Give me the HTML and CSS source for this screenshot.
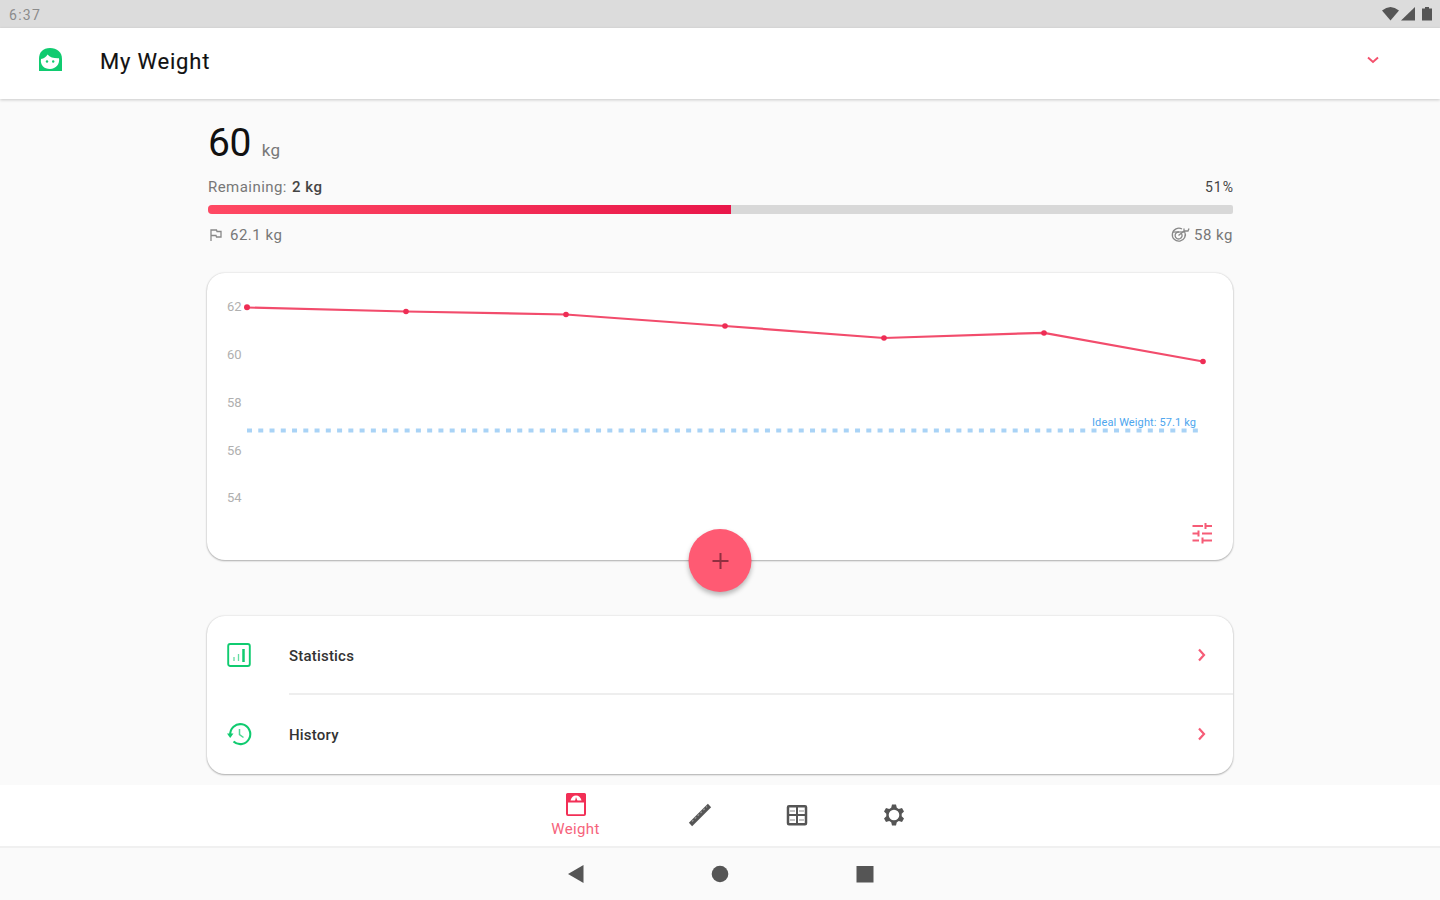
FILE: index.html
```html
<!DOCTYPE html>
<html lang="en">
<head>
<meta charset="utf-8">
<title>My Weight</title>
<link rel="stylesheet" href="styles.css">
</head>
<body>
<div class="status">
  <span class="clock">6:37</span>
  <svg class="status-icons" width="52" height="16" viewBox="0 0 52 16">
    <path d="M0 4.500Q8.500-2.500 17 4.500L8.500 14.500Z"/><path d="M19 14.500H33V1Z"/><path d="M40 2.500h3V1h4v1.500h3v12H40Z"/>
  </svg>
</div>
<header class="appbar">
  <svg class="avatar" width="24" height="24" viewBox="0 0 24 24">
    <path fill="#10cb70" d="M1 23V11C1 4 5 0 12 0S24 4 24 11V23Z"/>
    <path fill="#fff" d="M3 11C6 10.500 8 9 9.500 6.500C12 9.500 16 10.500 21 10.300C22 16 18 21 12 21S2 17 3 11Z"/>
    <circle cx="9" cy="13.500" r="1.200" fill="#10cb70"/><circle cx="15.200" cy="13.500" r="1.200" fill="#10cb70"/>
  </svg>
  <h1>My Weight</h1>
  <svg class="chevron-down" width="12" height="8" viewBox="0 0 12 8"><path d="M1 1.500L6 6L11 1.500"/></svg>
</header>
<main>
  <section class="summary">
    <div class="current"><span class="value">60</span><span class="unit">kg</span></div>
    <div class="row remaining"><span>Remaining: <b>2 kg</b></span><b>51%</b></div>
    <div class="track"><div class="fill" style="width:51%"></div></div>
    <div class="row goals">
      <span class="start"><svg width="14" height="14" viewBox="0 0 14 14"><path d="M2 13V2H7.500L8 3.500H12V9H7.500L7 7.500H2"/></svg>62.1 kg</span>
      <span class="goal"><svg width="18" height="16" viewBox="0 0 18 16"><path d="M13.500 4.500A6.500 6.500 0 1 1 11 2M10.500 6.500A3.500 3.500 0 1 1 8 5M7.500 8.500L13 4V1.500M13 4H17L18 1.500"/><path d="M2 5H13"/></svg>58 kg</span>
    </div>
  </section>
  <section class="card chart">
    <svg width="1026" height="287" viewBox="207 273 1026 287">
      <g class="axis">
        <text x="227" y="311">62</text><text x="227" y="358.500">60</text><text x="227" y="406.500">58</text><text x="227" y="454.500">56</text><text x="227" y="502">54</text>
      </g>
      <line class="ideal" x1="247" y1="430.500" x2="1198" y2="430.500"/>
      <text class="ideal-label" x="1092" y="426" textLength="104">Ideal Weight: 57.1 kg</text>
      <polyline class="series" points="247,307.500 406,311.500 566,314.500 725,326 884,338 1044,332.800 1203,361.500"/>
      <g class="points"><circle cx="247" cy="307.300" r="3"/><circle cx="406" cy="311.500" r="2.800"/><circle cx="566" cy="314.500" r="2.800"/><circle cx="725" cy="326" r="2.800"/><circle cx="884" cy="338" r="2.800"/><circle cx="1044" cy="333" r="2.800"/><circle cx="1203" cy="361.500" r="2.800"/></g>
      <g class="tune"><path d="M1192.500 526H1203M1206 526H1212M1192.500 533.500H1198M1202 533.500H1212M1192.500 540.500H1199M1203 540.500H1212M1205.500 523V529M1198.500 530.500V536.500M1202.500 537.500V543.500"/></g>
    </svg>
    <button class="fab" aria-label="Add"><svg width="16" height="16" viewBox="0 0 16 16"><path d="M8 0V16M0 8H16"/></svg></button>
  </section>
  <section class="card menu">
    <div class="item">
      <svg class="glyph" width="24" height="26" viewBox="0 0 24 26"><rect x="1.200" y="2" width="21.600" height="22" rx="2" stroke-width="1.900"/><path stroke-width="1.300" stroke-opacity=".65" d="M7 15V19M11.500 12V19"/><path stroke-width="2.500" d="M16.500 7V20"/></svg>
      <span class="label">Statistics</span>
      <svg class="next" width="10" height="14" viewBox="0 0 10 14"><path d="M2 1.500L7 7L2 12.500"/></svg>
    </div>
    <div class="item">
      <svg class="glyph" width="24" height="26" viewBox="0 0 24 26"><path stroke-width="2.100" d="M3.300 14A10 10 0 1 1 6.500 20.500"/><path fill="#10cb70" stroke="none" d="M0 12.500H6.500L3.200 17Z"/><path stroke-width="1.500" stroke-opacity=".75" d="M12.500 8V13.500L16.500 16.500"/></svg>
      <span class="label">History</span>
      <svg class="next" width="10" height="14" viewBox="0 0 10 14"><path d="M2 1.500L7 7L2 12.500"/></svg>
    </div>
  </section>
</main>
<nav class="tabs">
  <div class="tab active">
    <svg width="22" height="24" viewBox="0 0 22 24"><path fill="#f22f56" fill-rule="evenodd" d="M2.500 0H19.500Q21 0 21 1.500V21Q21 23 19 23H3Q1 23 1 21V1.500Q1 0 2.500 0ZM3 9.500V21.200H19V9.500Z"/><path fill="#fff" d="M5.500 7.500Q7 2.500 11 2.500T16.500 7.500Z"/><path fill="#f22f56" d="M10 8L11 4L12.500 8Z"/></svg>
    <span>Weight</span>
  </div>
  <div class="tab"><svg width="24" height="24" viewBox="0 0 24 24"><path d="M2.500 21.500L21.500 2.500" stroke="#555" stroke-width="4.600"/><path d="M4 18.500L19 3.500" stroke="#999" stroke-width="1.200" stroke-dasharray="2 2"/></svg></div>
  <div class="tab"><svg width="24" height="24" viewBox="0 0 24 24" fill="none" stroke="#555"><rect x="3" y="3.200" width="18" height="18" rx="1" stroke-width="2.500"/><path stroke-width="2" d="M12 3V21M3 12H21"/><path stroke-width="1.200" stroke="#888" d="M5 8H10M14 8H19M5 17H10M14 17H19"/></svg></div>
  <div class="tab"><svg width="24" height="24" viewBox="0 0 24 24"><path fill="#555" fill-rule="evenodd" d="M10 1.500H14L14.800 4.800L16.800 6L20 5L22 8.500L19.700 10.800V13.200L22 15.500L20 19L16.800 18L14.800 19.200L14 22.500H10L9.200 19.200L7.200 18L4 19L2 15.500L4.300 13.200V10.800L2 8.500L4 5L7.200 6L9.200 4.800ZM12 6.700A5.300 5.300 0 1 0 12 17.300A5.300 5.300 0 1 0 12 6.700Z"/></svg></div>
</nav>
<div class="sysnav">
  <svg width="18" height="20" viewBox="0 0 18 20"><path d="M1 10L16.500 1V19Z"/></svg>
  <svg width="18" height="20" viewBox="0 0 18 20"><circle cx="9" cy="10" r="8.300"/></svg>
  <svg width="18" height="20" viewBox="0 0 18 20"><rect x=".5" y="2" width="17" height="16.500"/></svg>
</div>
</body>
</html>
```
FILE: styles.css
```css
* { box-sizing: border-box; }
body { margin: 0; width: 1440px; height: 900px; overflow: hidden; display: flex; flex-direction: column; background: #fafafa; color: #222; font-family: Roboto, "Liberation Sans", sans-serif; }
svg { display: block; flex: none; overflow: visible; }
.status { flex: none; height: 28px; padding: 0 6px 0 9px; background: #dcdcdc; display: flex; align-items: center; justify-content: space-between; }
.clock { color: #8b8b8b; font-size: 14px; letter-spacing: 1.3px; padding-top: 1px; }
.status-icons { fill: #555; }
.appbar { flex: none; height: 71px; padding: 0 61px 7px 38px; display: flex; align-items: center; background: #fff; box-shadow: 0 1px 3px rgba(0,0,0,.2); }
h1 { margin: 3px 0 0 38px; font-size: 22px; font-weight: 400; line-height: 26px; letter-spacing: .8px; color: #111; flex: 1; -webkit-text-stroke: .15px #111; }
.chevron-down { fill: none; stroke: #f4506c; stroke-width: 1.900; }
main { flex: none; height: 686px; width: 1026px; margin: 0 auto; display: flex; flex-direction: column; }
.summary { height: 174px; padding: 21px 0 0 1px; }
.current { height: 46px; display: flex; align-items: baseline; gap: 11px; line-height: 46px; }
.value { font-size: 39px; font-weight: 400; letter-spacing: -.5px; color: #111; }
.unit { font-size: 17px; letter-spacing: .3px; color: #777; }
.row { display: flex; justify-content: space-between; font-size: 15px; line-height: 18px; color: #777; }
.row b { font-weight: 500; color: #444; }
.remaining { margin-top: 12px; letter-spacing: .45px; }
.remaining span b { margin-left: 1px; }
.remaining > b { font-size: 14px; font-weight: 400; letter-spacing: 1px; margin-right: -1px; }
.track { height: 9px; margin-top: 9px; border-radius: 4px 2px 2px 4px; overflow: hidden; background: #d8d8d8; }
.fill { height: 9px; background: linear-gradient(90deg, #ff4963, #e9174a); }
.goals { margin-top: 12px; letter-spacing: .5px; }
.goals span { display: flex; align-items: center; }
.goals svg { fill: none; stroke: #888; stroke-width: 1.300; }
.start { gap: 7px; padding-left: 1px; }
.goal { gap: 5px; }
.card { background: #fff; border-radius: 18px; box-shadow: 0 1px 2px rgba(0,0,0,.28), 0 0 2px rgba(0,0,0,.16); }
.chart { height: 287px; position: relative; }
.axis { fill: #b0b0b0; font-size: 13px; }
.ideal { stroke: #a9d3f6; stroke-width: 4; stroke-dasharray: 5 6.260; }
.ideal-label { fill: #4da6ee; font-size: 11px; }
.series { fill: none; stroke: #f24c6c; stroke-width: 2.200; }
.points { fill: #ee2d55; }
.tune { fill: none; stroke: #f65c77; stroke-width: 2; }
.fab { position: absolute; left: 50%; bottom: -32px; transform: translateX(-50%); width: 63px; height: 63px; padding: 0; border: 0; border-radius: 50%; background: #ff5a73; display: flex; align-items: center; justify-content: center; box-shadow: 0 3px 5px rgba(0,0,0,.28); }
.fab svg { stroke: #912f40; stroke-width: 2; }
.menu { margin-top: 56px; height: 158px; }
.item { height: 79px; padding: 0 26px 2px 20px; display: flex; align-items: center; }
.glyph { fill: none; stroke: #10cb70; }
.label { flex: 1; margin-left: 38px; padding-top: 2px; font-size: 15px; font-weight: 500; letter-spacing: .2px; color: #333; }
.item:first-child { background: linear-gradient(#eee, #eee) 82px 100% / 100% 2px no-repeat; }
.next { fill: none; stroke: #f65c77; stroke-width: 2.200; }
.tabs { flex: none; height: 61px; padding: 0 0 2px 525px; display: grid; grid-template-columns: 101px 148px 45px 149px; background: #fff; align-items: center; }
.tab { display: flex; flex-direction: column; align-items: center; }
.active { color: #f6637b; font-size: 15px; line-height: 20px; letter-spacing: .4px; }
.active span { margin-top: 2px; margin-bottom: -2px; }
.sysnav { flex: none; height: 53px; border-top: 2px solid #f0f0f0; display: flex; gap: 126.500px; align-items: center; justify-content: center; fill: #555; }
```
